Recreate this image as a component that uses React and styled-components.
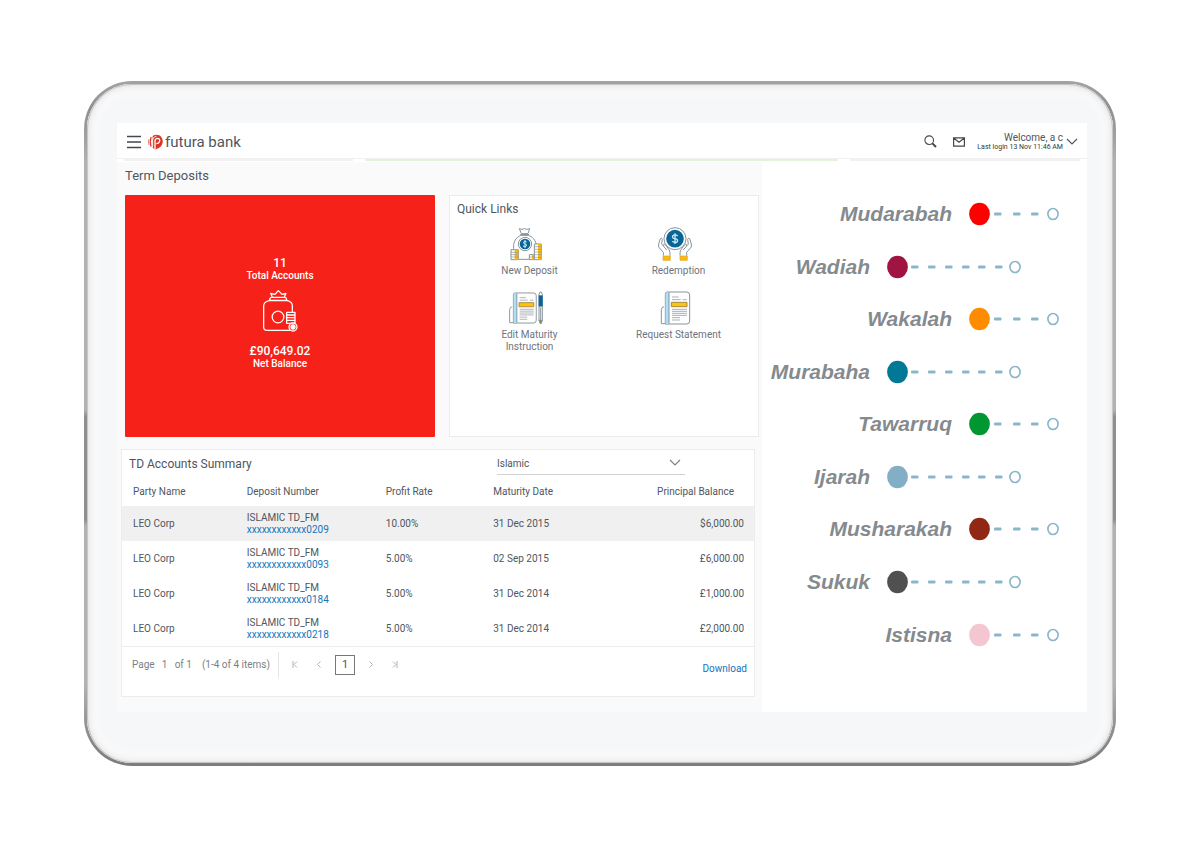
import React, { useState } from 'react'
import styled, { createGlobalStyle } from 'styled-components'

const accounts = [
    { id: 1, party: "LEO Corp", product: "ISLAMIC TD_FM", number: "xxxxxxxxxxxx0209", rate: "10.00%", date: "31 Dec 2015", balance: "$6,000.00" },
    { id: 2, party: "LEO Corp", product: "ISLAMIC TD_FM", number: "xxxxxxxxxxxx0093", rate: "5.00%", date: "02 Sep 2015", balance: "£6,000.00" },
    { id: 3, party: "LEO Corp", product: "ISLAMIC TD_FM", number: "xxxxxxxxxxxx0184", rate: "5.00%", date: "31 Dec 2014", balance: "£1,000.00" },
    { id: 4, party: "LEO Corp", product: "ISLAMIC TD_FM", number: "xxxxxxxxxxxx0218", rate: "5.00%", date: "31 Dec 2014", balance: "£2,000.00" },
]

const products = [
    { name: "Mudarabah", color: "#fe0000" },
    { name: "Wadiah", color: "#a01441", long: true },
    { name: "Wakalah", color: "#ff8c00" },
    { name: "Murabaha", color: "#007896", long: true },
    { name: "Tawarruq", color: "#009632" },
    { name: "Ijarah", color: "#82afc6", long: true },
    { name: "Musharakah", color: "#912814" },
    { name: "Sukuk", color: "#505050", long: true },
    { name: "Istisna", color: "#f4c6d2" },
]

function Trail({ color, long }) {
    const width = long ? 135 : 91
    const dashes = long ? [24, 41, 58, 75, 91, 108] : [25, 44, 62]
    return (
        <svg width={width} height="24" viewBox={`0 0 ${width} 24`} aria-hidden="true">
            <ellipse cx="10.5" cy="12" rx="10.4" ry="11.2" fill={color} />
            {dashes.map((x) => (
                <rect key={x} x={x} y="10.6" width="7.5" height="2.8" rx="1" fill="#8ab6ca" />
            ))}
            <ellipse cx={width - 7} cy="12" rx="5.1" ry="5.5" fill="#fff" stroke="#8ab6ca" strokeWidth="1.6" />
        </svg>
    )
}

function FuturaMark() {
    return (
        <svg width="15" height="16" viewBox="0 0 45 48" aria-hidden="true">
            <path d="M3 15Q0 24 3 33" fill="none" stroke="#e9806f" strokeWidth="3" />
            <path d="M9 9Q5 24 9 38" fill="none" stroke="#dd3a2a" strokeWidth="4" />
            <path d="M14 6Q24 -1 34 4Q45 11 44 25Q42 37 32 42L21 47L14 41Z" fill="#dc3223" />
            <path d="M21 47V22Q21 13 29 13Q36 14 35 21Q34 28 25 29" fill="none" stroke="#fff" strokeWidth="4" />
            <path d="M14 40V18Q15 8 26 6" fill="none" stroke="#fff" strokeWidth="2.4" />
        </svg>
    )
}

function VaultIcon() {
    return (
        <svg width="35" height="42" viewBox="0 0 105 126" fill="none" stroke="#fff" strokeWidth="3.8" strokeLinejoin="round" aria-hidden="true">
            <path d="M28 22L23 10L36 13L46 2L57 13L69 10L64 22" />
            <path d="M26 22H65Q71 22 71 31H20Q20 22 26 22Z" />
            <path d="M18 32Q2 36 2 48V112Q2 121 12 121H78Q88 121 88 112V48Q88 36 74 32Z" />
            <circle cx="45" cy="81" r="17.5" />
            <path d="M71 67H96V100H71Z" fill="#f62219" />
            <path d="M71 75H96M71 83H96M71 91H96" strokeWidth="4" />
            <circle cx="90" cy="111" r="12" fill="#f62219" />
            <circle cx="90" cy="111" r="6" fill="#fff" />
        </svg>
    )
}

function DepositIcon() {
    return (
        <svg width="32" height="34" viewBox="0 0 96 102" fill="none" stroke="#87949c" strokeWidth="3" strokeLinejoin="round" aria-hidden="true">
            <path d="M34 20L28 5Q37 9 43 5Q50 9 59 5L54 20Z" fill="#fff" />
            <path d="M31 23H57" strokeWidth="4" />
            <path d="M11 65V52Q14 32 33 25H55Q74 31 79 52V97H11Z" fill="#fff" />
            <circle cx="45" cy="51" r="20" fill="#fff" />
            <circle cx="45" cy="51" r="16" fill="#0a6597" stroke="none" />
            <path d="M50 45Q45 41 41 45Q40 50 45 51Q51 52 49 57Q45 61 39 57M45 39V63" stroke="#c9ecf8" />
            <rect x="3" y="68" width="22" height="30" fill="#fff" />
            <path d="M14 68H25V98H14Z" fill="#ffba08" stroke="none" />
            <path d="M3 76H25M3 83H25M3 90H25" strokeWidth="2" />
            <rect x="58" y="83" width="15" height="15" fill="#fff" />
            <path d="M66 83H73V98H66Z" fill="#ffba08" stroke="none" />
            <path d="M58 90H73" strokeWidth="2" />
            <rect x="73" y="51" width="21" height="47" fill="#fff" />
            <path d="M84 51H94V98H84Z" fill="#ffba08" stroke="none" />
            <path d="M73 59H94M73 67H94M73 75H94M73 83H94M73 91H94" strokeWidth="2" />
        </svg>
    )
}

function HandsIcon() {
    return (
        <svg width="34" height="34" viewBox="0 0 102 102" fill="none" stroke="#87949c" strokeWidth="3" strokeLinejoin="round" aria-hidden="true">
            <path d="M16 86V76L2 60V51L7 35Q11 31 13 37L11 51L17 58Q16 48 22 53L33 68Q37 73 36 86" fill="#fff" />
            <path d="M86 86V76L100 60V51L95 35Q91 31 89 37L91 51L85 58Q86 48 80 53L69 68Q65 73 66 86" fill="#fff" />
            <path d="M17 58L26 69M85 58L76 69" />
            <circle cx="51" cy="35" r="33" fill="#fff" />
            <circle cx="51" cy="35" r="26.5" fill="#0a6597" stroke="none" />
            <path d="M59 27Q51 20 44 27Q42 34 51 35Q61 37 58 44Q51 50 43 43M51 19V51" stroke="#c9ecf8" strokeWidth="4" />
            <rect x="15" y="87" width="22" height="13" fill="#ffba08" stroke="#d5a63c" strokeWidth="2" />
            <rect x="66" y="87" width="22" height="13" fill="#ffba08" stroke="#d5a63c" strokeWidth="2" />
        </svg>
    )
}

function BookIcon({ pen }) {
    return (
        <svg width="34" height="34" viewBox="0 0 102 102" fill="none" stroke="#87949c" strokeWidth="3" strokeLinejoin="round" aria-hidden="true">
            <g transform={pen ? "translate(0 4) scale(0.94)" : "translate(8 1)"}>
                <path d="M10 46Q2 47 2 55V97H24" fill="#fff" />
                <path d="M19 2H78Q87 2 87 11V89Q87 98 78 98H14V9Q14 2 19 2Z" fill="#fff" />
                <path d="M15 10Q15 3 25 3V97H15Z" fill="#aee0f5" stroke="none" />
                <path d="M25 3V97" />
                <path d="M34 17H54M34 25H60M66 25H78" strokeWidth="2.2" />
                <rect x="32" y="33" width="47" height="13" fill="#ffc20e" stroke="#a98a3a" />
                <path d="M34 54H79M34 60H79M34 66H79M34 72H79M34 79H58M34 86H58" strokeWidth="2.2" />
            </g>
            {pen && (
                <g>
                    <path d="M90 10L93 3H97L100 10V88L95 99L90 88Z" fill="#fff" />
                    <rect x="89" y="13" width="12" height="33" fill="#0a6597" stroke="none" />
                    <path d="M90 47H100M95 50V88" />
                    <path d="M90 88H100L95 99Z" fill="#8d7b3f" />
                </g>
            )}
        </svg>
    )
}

function Chevron({ width, height }) {
    return (
        <svg width={width} height={height} viewBox="0 0 12 7" fill="none" stroke="currentColor" strokeWidth="1.2" aria-hidden="true">
            <path d="M1 1L6 6L11 1" />
        </svg>
    )
}

const quickLinks = [
    { id: 0, title: "New Deposit", icon: <DepositIcon /> },
    { id: 1, title: "Redemption", icon: <HandsIcon /> },
    { id: 2, title: "Edit Maturity Instruction", icon: <BookIcon pen /> },
    { id: 3, title: "Request Statement", icon: <BookIcon /> },
]

export default function App() {
    const [type, setType] = useState("Islamic")
    const [page, setPage] = useState("1")

    const accountRows = () => {
        return (
            accounts.map((account) => (
                <AccountRow key={account.id}>
                    <Cell>{account.party}</Cell>
                    <Cell>
                        {account.product}
                        <AccountLink href="#account">{account.number}</AccountLink>
                    </Cell>
                    <Cell>{account.rate}</Cell>
                    <Cell>{account.date}</Cell>
                    <Cell $right>{account.balance}</Cell>
                </AccountRow>
            ))
        )
    }

    return (
        <Page>
            <GlobalStyle />
            <Device>
                <Screen>
                    <TopBar>
                        <IconButton aria-label="Menu">
                            <svg width="14" height="14" viewBox="0 0 14 14" stroke="#43484e" strokeWidth="1.5" aria-hidden="true">
                                <path d="M0 1.5H14M0 7H14M0 12.5H14" />
                            </svg>
                        </IconButton>
                        <Brand href="#home">
                            <FuturaMark />
                            futura bank
                        </Brand>
                        <TopActions>
                            <IconButton aria-label="Search">
                                <svg width="13" height="13" viewBox="0 0 13 13" fill="none" stroke="#43484e" aria-hidden="true">
                                    <circle cx="5.2" cy="5.2" r="4.3" strokeWidth="1.1" />
                                    <path d="M8.4 8.4L12 12" strokeWidth="2" />
                                </svg>
                            </IconButton>
                            <IconButton aria-label="Messages">
                                <svg width="12" height="10" viewBox="0 0 12 10" fill="none" stroke="#43484e" strokeWidth="1.2" aria-hidden="true">
                                    <path d="M0.6 0.8H11.4V9.2H0.6ZM0.6 1L6 5.2L11.4 1" />
                                </svg>
                            </IconButton>
                            <UserButton>
                                <UserText>
                                    <Welcome>Welcome, a c</Welcome>
                                    <LastLogin>Last login 13 Nov 11:46 AM</LastLogin>
                                </UserText>
                                <Chevron width="12" height="7" />
                            </UserButton>
                        </TopActions>
                    </TopBar>
                    <CardEdges>
                        <CardEdge />
                        <CardEdge $green />
                        <CardEdge />
                    </CardEdges>
                    <Content>
                        <Main>
                            <PageTitle>Term Deposits</PageTitle>
                            <Tiles>
                                <BalanceTile>
                                    <Figure>11</Figure>
                                    <FigureLabel>Total Accounts</FigureLabel>
                                    <TileIcon><VaultIcon /></TileIcon>
                                    <Figure>£90,649.02</Figure>
                                    <FigureLabel>Net Balance</FigureLabel>
                                </BalanceTile>
                                <QuickTile>
                                    <CardTitle>Quick Links</CardTitle>
                                    <QuickGrid>
                                        {quickLinks.map((link) => (
                                            <QuickLink key={link.id} href="#link">
                                                <QuickIcon>{link.icon}</QuickIcon>
                                                <QuickLabel>{link.title}</QuickLabel>
                                            </QuickLink>
                                        ))}
                                    </QuickGrid>
                                </QuickTile>
                            </Tiles>
                            <Summary>
                                <SummaryHead>
                                    <CardTitle>TD Accounts Summary</CardTitle>
                                    <SelectWrap>
                                        <TypeSelect aria-label="Account type" value={type} onChange={(e) => setType(e.target.value)}>
                                            <option>Islamic</option>
                                            <option>Conventional</option>
                                        </TypeSelect>
                                        <SelectArrow><Chevron width="12" height="7" /></SelectArrow>
                                    </SelectWrap>
                                </SummaryHead>
                                <AccountTable>
                                    <colgroup>
                                        <Col $width="18%" />
                                        <Col $width="22%" />
                                        <Col $width="17%" />
                                        <Col $width="21%" />
                                        <Col $width="22%" />
                                    </colgroup>
                                    <thead>
                                        <tr>
                                            <HeadCell>Party Name</HeadCell>
                                            <HeadCell>Deposit Number</HeadCell>
                                            <HeadCell>Profit Rate</HeadCell>
                                            <HeadCell>Maturity Date</HeadCell>
                                            <HeadCell $right>Principal Balance</HeadCell>
                                        </tr>
                                    </thead>
                                    <tbody>{accountRows()}</tbody>
                                </AccountTable>
                                <SummaryFoot>
                                    <Paging>
                                        <label htmlFor="page">Page</label>
                                        <PageInput id="page" value={page} onChange={(e) => setPage(e.target.value)} />
                                        <span>of 1</span>
                                        <ItemCount>(1-4 of 4 items)</ItemCount>
                                    </Paging>
                                    <Pager>
                                        <PagerButton aria-label="First page" disabled>
                                            <svg width="6" height="7" viewBox="0 0 6 7" fill="none" stroke="currentColor"><path d="M1 0V7M5 0.5L2 3.5L5 6.5" /></svg>
                                        </PagerButton>
                                        <PagerButton aria-label="Previous page" disabled>
                                            <svg width="6" height="7" viewBox="0 0 6 7" fill="none" stroke="currentColor"><path d="M4.5 0.5L1.5 3.5L4.5 6.5" /></svg>
                                        </PagerButton>
                                        <CurrentPage>1</CurrentPage>
                                        <PagerButton aria-label="Next page" disabled>
                                            <svg width="6" height="7" viewBox="0 0 6 7" fill="none" stroke="currentColor"><path d="M1.5 0.5L4.5 3.5L1.5 6.5" /></svg>
                                        </PagerButton>
                                        <PagerButton aria-label="Last page" disabled>
                                            <svg width="6" height="7" viewBox="0 0 6 7" fill="none" stroke="currentColor"><path d="M1 0.5L4 3.5L1 6.5M5 0V7" /></svg>
                                        </PagerButton>
                                    </Pager>
                                    <Download href="#download">Download</Download>
                                </SummaryFoot>
                            </Summary>
                        </Main>
                        <ProductList>
                            {products.map((product) => (
                                <ProductItem key={product.name} $long={product.long}>
                                    {product.name}
                                    <Trail color={product.color} long={product.long} />
                                </ProductItem>
                            ))}
                        </ProductList>
                    </Content>
                </Screen>
            </Device>
        </Page>
    )
}

const GlobalStyle = createGlobalStyle`
    * {
        box-sizing: border-box;
    }
    body {
        margin: 0;
        background: #fff;
        color: #4f5660;
        font-family: Roboto, "Liberation Sans", sans-serif;
        font-size: 11px;
    }
    button, input, select {
        font: inherit;
        color: inherit;
    }
    a {
        text-decoration: none;
    }
    svg {
        display: block;
        flex: none;
    }
`
const Page = styled.div`
    padding: 81px 84px;
`
const Device = styled.div`
    padding: 39px 26px 51px 30px;
    border: 3px solid transparent;
    border-radius: 48px;
    background:
        linear-gradient(#f6f7f9, #f6f7f9) padding-box,
        linear-gradient(#a3a3a3, #8f8f8f 4%, #b2b2b2 12%, #b2b2b2 48%, #8f8f8f 49%, #8f8f8f 64%, #b2b2b2 65%, #b2b2b2 88%, #858585 97%, #7d7d7d) border-box;
    box-shadow: inset 0 0 1px 1px #c2c2c2, inset 0 0 5px 4px #ececec, inset 0 0 10px 8px #fbfbfc;
`
const Screen = styled.div`
    background: #fff;
`
const TopBar = styled.header`
    display: flex;
    align-items: center;
    height: 36px;
    padding: 2px 9px 0 10px;
    border-bottom: 1px solid #f1f1f1;
`
const IconButton = styled.button`
    padding: 0;
    border: none;
    background: none;
    cursor: pointer;
`
const Brand = styled.a`
    display: flex;
    align-items: center;
    gap: 2px;
    margin-left: 7px;
    color: #50565e;
    font-size: 15px;
    line-height: 20px;
`
const TopActions = styled.div`
    display: flex;
    align-items: center;
    gap: 16px;
    margin-left: auto;
`
const UserButton = styled(IconButton)`
    display: flex;
    align-items: center;
    gap: 3px;
    margin-left: -4px;
`
const UserText = styled.span`
    display: flex;
    flex-direction: column;
    text-align: right;
`
const Welcome = styled.span`
    font-size: 10px;
    line-height: 11px;
`
const LastLogin = styled.span`
    color: #33373c;
    font-size: 7px;
    line-height: 9px;
`
const CardEdges = styled.div`
    display: grid;
    grid-template-columns: 229fr 473fr 230fr;
    gap: 12px;
    padding: 0 7px;
`
const CardEdge = styled.div`
    height: 3px;
    border-top: 2px solid ${(props) => props.$green ? "#e2f5dc" : "#f1f1f1"};
`
const Content = styled.div`
    display: grid;
    grid-template-columns: 645fr 325fr;
`
const Main = styled.main`
    padding: 5px 3px 15px;
    background: #fafafa;
`
const PageTitle = styled.h1`
    margin: 0 5px 10px;
    font-size: 13px;
    font-weight: 400;
    line-height: 18px;
`
const Tiles = styled.div`
    display: grid;
    grid-template-columns: 1fr 1fr;
    gap: 14px;
    min-height: 242px;
    padding-left: 5px;
`
const BalanceTile = styled.section`
    display: flex;
    flex-direction: column;
    align-items: center;
    justify-content: center;
    padding-bottom: 6px;
    border-radius: 1px;
    background: #f62219;
    color: #fff;
`
const Figure = styled.strong`
    font-size: 12px;
    font-weight: 500;
    line-height: 14px;
`
const FigureLabel = styled.span`
    font-size: 10px;
    font-weight: 500;
    line-height: 12px;
`
const TileIcon = styled.div`
    margin: 8px 0 12px;
`
const QuickTile = styled.section`
    padding: 6px 5px;
    border: 1px solid #ececec;
    background: #fff;
`
const CardTitle = styled.h2`
    margin: 0 2px;
    font-size: 12px;
    font-weight: 400;
    line-height: 14px;
`
const QuickGrid = styled.div`
    display: grid;
    grid-template-columns: 1fr 1fr;
    row-gap: 14px;
    margin-top: 11px;
`
const QuickLink = styled.a`
    display: flex;
    flex-direction: column;
    align-items: center;
    color: #6d7480;
    text-align: center;
`
const QuickIcon = styled.span`
    margin: 0 8px 4px 0;
`
const QuickLabel = styled.span`
    max-width: 90px;
    font-size: 10px;
    line-height: 12px;
`
const Summary = styled.section`
    margin: 12px 4px 0 1px;
    border: 1px solid #ececec;
    background: #fff;
`
const SummaryHead = styled.div`
    display: flex;
    align-items: center;
    justify-content: space-between;
    padding: 2px 69px 2px 5px;
`
const SelectWrap = styled.div`
    position: relative;
    width: 188px;
`
const TypeSelect = styled.select`
    width: 100%;
    height: 23px;
    padding: 0 20px 0 0;
    border: none;
    border-bottom: 1px solid #d2d2d2;
    border-radius: 0;
    background: none;
    font-size: 10px;
    appearance: none;
`
const SelectArrow = styled.span`
    position: absolute;
    top: 7px;
    right: 4px;
    color: #7b8087;
    pointer-events: none;
`
const AccountTable = styled.table`
    width: 100%;
    border-bottom: 1px solid #ececec;
    border-collapse: collapse;
    table-layout: fixed;
`
const Col = styled.col`
    width: ${(props) => props.$width};
`
const HeadCell = styled.th`
    height: 29px;
    padding: 0 ${(props) => props.$right ? "20px" : "0"} 0 11px;
    font-size: 10px;
    font-weight: 400;
    text-align: ${(props) => props.$right ? "right" : "left"};
    white-space: nowrap;
`
const AccountRow = styled.tr`
    &:first-child {
        background: #f0f0f0;
    }
`
const Cell = styled.td`
    height: 35px;
    padding: 1px 10px 0 11px;
    font-size: 10px;
    line-height: 12px;
    text-align: ${(props) => props.$right ? "right" : "left"};
    white-space: nowrap;
`
const AccountLink = styled.a`
    display: block;
    color: #1474bd;
`
const SummaryFoot = styled.div`
    display: flex;
    align-items: center;
    height: 49px;
    padding: 0 7px 13px 10px;
    color: #7c7f84;
`
const Paging = styled.div`
    display: flex;
    align-items: center;
    height: 26px;
    padding-right: 8px;
    border-right: 1px solid #e6e6e6;
    font-size: 10px;
`
const PageInput = styled.input`
    width: 20px;
    padding: 0;
    border: none;
    background: none;
    text-align: center;
`
const ItemCount = styled.span`
    margin-left: 10px;
`
const Pager = styled.div`
    display: flex;
    align-items: center;
    gap: 9px;
    margin-left: 8px;
`
const PagerButton = styled(IconButton)`
    padding: 0 5px;
    color: #b0b3b6;
    &:nth-child(2), &:nth-child(4) {
        margin: 0 -1px;
    }
`
const CurrentPage = styled(IconButton)`
    width: 20px;
    height: 20px;
    border: 1px solid #777;
    color: #4f5660;
`
const Download = styled.a`
    margin: 8px 0 0 auto;
    color: #1474bd;
    font-size: 10px;
`
const ProductList = styled.ul`
    display: flex;
    flex-direction: column;
    justify-content: space-between;
    margin: 0;
    padding: 40px 0 65px;
    list-style: none;
`
const ProductItem = styled.li`
    display: flex;
    align-items: center;
    justify-content: flex-end;
    gap: 17px;
    padding-right: ${(props) => props.$long ? "65px" : "27px"};
    color: #858a8e;
    font-family: "Liberation Sans", Arial, sans-serif;
    font-size: 21px;
    font-style: italic;
    font-weight: 700;
    line-height: 24px;
`
